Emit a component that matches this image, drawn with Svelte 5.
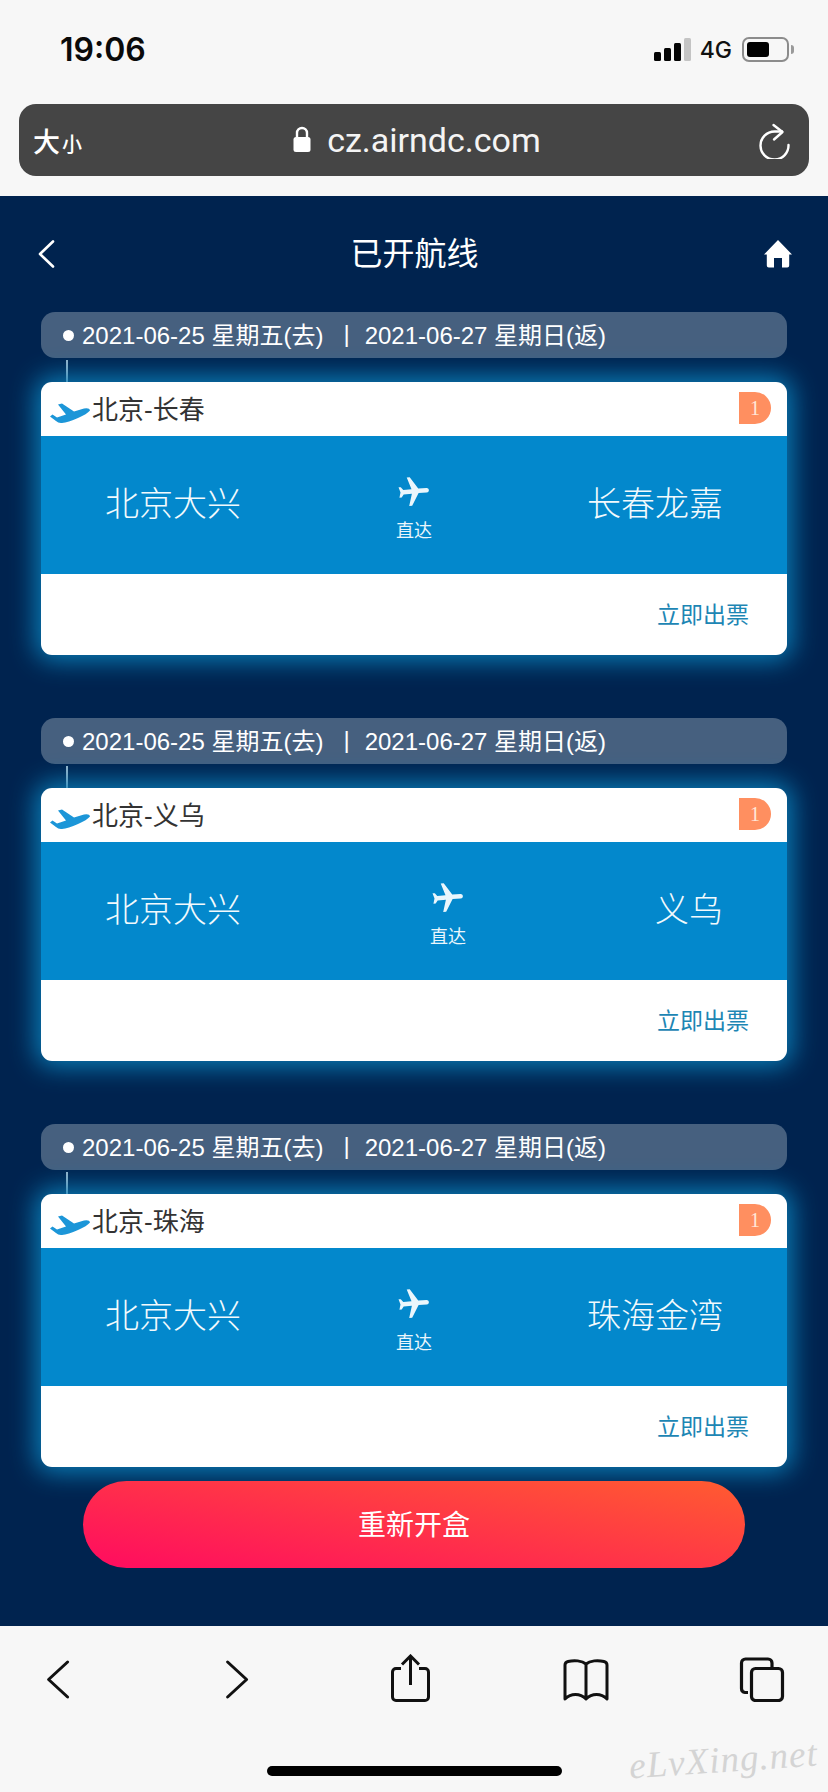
<script>
	const routes = [
		{ name: "北京-长春", from: "北京大兴", to: "长春龙嘉" },
		{ name: "北京-义乌", from: "北京大兴", to: "义乌" },
		{ name: "北京-珠海", from: "北京大兴", to: "珠海金湾" }
	];
</script>

<div class="page">
	<header class="browser-top">
		<div class="status">
			<span class="time">19:06</span>
			<div class="status-right">
				<div class="signal">
					<i class="b1"></i><i class="b2"></i><i class="b3"></i><i class="b4"></i>
				</div>
				<span class="net">4G</span>
				<div class="battery"><div class="level"></div></div>
				<div class="battery-tip"></div>
			</div>
		</div>
		<div class="urlbar">
			<div class="textsize"><span class="big">大</span><span class="small">小</span></div>
			<div class="address">
				<svg class="lock" viewBox="0 0 18 26" width="18" height="26">
					<path d="M4 12V7a5 5 0 0 1 10 0v5" fill="none" stroke="#fff" stroke-width="2.4" />
					<rect x="0.5" y="11" width="17" height="15" rx="2.5" fill="#fff" />
				</svg>
				<span>cz.airndc.com</span>
			</div>
			<svg class="reload" viewBox="0 0 32 36" width="32" height="36">
				<path d="M24 8.500H16.500A14 14 0 1 0 30.500 22" fill="none" stroke="#fff" stroke-width="2.400" stroke-linecap="round" />
				<path d="M15.500 2L24.500 9L16 16.500" fill="none" stroke="#fff" stroke-width="2.400" stroke-linecap="round" stroke-linejoin="round" />
			</svg>
		</div>
	</header>

	<main class="content">
		<nav class="nav">
			<svg viewBox="0 0 18 28" width="18" height="28">
				<path d="M16 1.500L3 14l13 12.500" fill="none" stroke="#fff" stroke-width="2.600" stroke-linecap="round" stroke-linejoin="round" />
			</svg>
			<h1>已开航线</h1>
			<svg viewBox="0 0 28 28" width="28" height="28">
				<path d="M14 0L28 14.500h-2.800V25.500a2 2 0 0 1-2 2H18V18h-8v9.500H4.800a2 2 0 0 1-2-2V14.500H0z" fill="#fff" />
			</svg>
		</nav>

		{#each routes as route}
			<section class="group">
				<div class="dates">
					<i class="dot"></i>
					<span>2021-06-25 星期五(去)</span>
					<span class="sep">|</span>
					<span>2021-06-27 星期日(返)</span>
				</div>
				<div class="connector"></div>
				<article class="card">
					<div class="card-head">
						<svg class="takeoff" viewBox="0 0 40 20" width="40" height="20">
							<path d="M0 13.500L2.500 11.500L7 14.500L16 11.500L8 1.500L12 0.500L24 8.500L34 5.500Q39.500 4.500 40 7.500Q37 11 28 15Q18 19.500 12 20Q8.500 20.200 6 18Z" fill="#1c96d8" />
						</svg>
						<span class="route-name">{route.name}</span>
						<span class="badge">1</span>
					</div>
					<div class="card-body">
						<span class="city">{route.from}</span>
						<div class="direct">
							<svg viewBox="0 0 24 24" width="36" height="36">
								<path transform="rotate(85 12 12)" d="M21 16v-2l-8-5V3.500c0-.83-.67-1.500-1.500-1.500S10 2.670 10 3.500V9l-8 5v2l8-2.500V19l-2 1.500V22l3.500-1 3.500 1v-1.500L13 19v-5.500l8 2.500z" fill="#eaf6fc" />
							</svg>
							<span>直达</span>
						</div>
						<span class="city">{route.to}</span>
					</div>
					<div class="card-foot">
						<span>立即出票</span>
					</div>
				</article>
			</section>
		{/each}

		<button class="reopen">重新开盒</button>
	</main>

	<footer class="toolbar">
		<div class="icons">
			<svg viewBox="0 0 46 48" width="46" height="48">
				<path d="M32.600 8L13.600 25.500L32.600 43" fill="none" stroke="#111" stroke-width="3" stroke-linecap="round" stroke-linejoin="round" />
			</svg>
			<svg viewBox="0 0 46 48" width="46" height="48">
				<path d="M16.600 8L35.600 25.500L16.600 43" fill="none" stroke="#111" stroke-width="3" stroke-linecap="round" stroke-linejoin="round" />
			</svg>
			<svg viewBox="0 0 46 48" width="46" height="48">
				<path d="M14 14.500H9a3.500 3.500 0 0 0-3.500 3.500V43a3.500 3.500 0 0 0 3.500 3.500H38A3.500 3.500 0 0 0 41.500 43V18A3.500 3.500 0 0 0 38 14.500H32" fill="none" stroke="#111" stroke-width="3" />
				<path d="M23.500 31V2M15 10.500L23.500 2L32 10.500" fill="none" stroke="#111" stroke-width="3" />
			</svg>
			<svg viewBox="0 0 46 48" width="46" height="48">
				<path d="M23 10C19 6.500 11 6 5 7.500C3 8 2 9 2 11V45C8 39 17 39 23 45C29 39 38 39 44 45V11C44 9 43 8 41 7.500C35 6 27 6.500 23 10ZM23 10V45" fill="none" stroke="#111" stroke-width="3" stroke-linejoin="round" />
			</svg>
			<svg viewBox="0 0 46 48" width="46" height="48">
				<path d="M9 38.500H6A4 4 0 0 1 2.500 34.500V9A4 4 0 0 1 6.500 5H29A4 4 0 0 1 33 9V14" fill="none" stroke="#111" stroke-width="3.200" />
				<rect x="12.500" y="14.500" width="31" height="32" rx="4" fill="none" stroke="#111" stroke-width="3.200" />
			</svg>
		</div>
		<div class="home-row">
			<div class="home-bar"></div>
			<span class="watermark">eLvXing.net</span>
		</div>
	</footer>
</div>

<style>
	:global(body) {
		margin: 0;
		background: #f7f7f7;
	}
	.page {
		width: 828px;
		height: 1792px;
		display: flex;
		flex-direction: column;
		overflow: hidden;
		font-family: "Liberation Sans", "Noto Sans CJK SC", sans-serif;
		background: #f7f7f7;
	}

	/* browser chrome */
	.browser-top {
		height: 196px;
		flex: none;
		padding: 0 19px;
		box-sizing: border-box;
	}
	.status {
		height: 104px;
		display: flex;
		align-items: center;
		justify-content: space-between;
		padding: 0 15px 5px 41px;
		box-sizing: border-box;
	}
	.time {
		font-family: Inter, sans-serif;
		font-size: 32px;
		font-weight: 600;
		color: #0a0a0a;
	}
	.status-right {
		display: flex;
		align-items: center;
	}
	.signal {
		display: flex;
		align-items: flex-end;
		gap: 3px;
		height: 23px;
	}
	.signal i {
		width: 7px;
		background: #050505;
		border-radius: 1.5px;
	}
	.signal .b1 { height: 9px; }
	.signal .b2 { height: 13px; }
	.signal .b3 { height: 18px; }
	.signal .b4 { height: 23px; background: #c4c4c4; }
	.net {
		font-family: Inter, sans-serif;
		font-size: 23px;
		font-weight: 500;
		color: #111;
		margin: 0 10px 0 9px;
	}
	.battery {
		width: 47px;
		height: 25px;
		box-sizing: border-box;
		border: 2px solid #8c8c8c;
		border-radius: 7px;
		padding: 3px;
	}
	.level {
		width: 22px;
		height: 15px;
		background: #000;
		border-radius: 3px;
	}
	.battery-tip {
		width: 3px;
		height: 9px;
		margin-left: 2px;
		background: #9a9a9a;
		border-radius: 0 3px 3px 0;
	}
	.urlbar {
		height: 72px;
		background: #454545;
		border-radius: 17px;
		display: grid;
		grid-template-columns: 1fr auto 1fr;
		align-items: center;
		padding: 0 19px 0 14px;
		color: #fff;
	}
	.textsize {
		display: flex;
		align-items: baseline;
		font-weight: 500;
		font-family: "Noto Sans CJK SC", sans-serif;
	}
	.big { font-size: 27px; }
	.small { font-size: 20px; margin-left: 2px; }
	.address {
		display: flex;
		align-items: center;
		gap: 16px;
		margin-left: 11px;
		font-family: Roboto, sans-serif;
		font-size: 34px;
		color: #f4f4f4;
	}
	.lock { margin-top: -2px; }
	.reload { justify-self: end; margin-top: 2px; }

	/* page */
	.content {
		flex: 1;
		background: #00234f;
		padding: 0 41px;
		display: flex;
		flex-direction: column;
	}
	.nav {
		height: 116px;
		flex: none;
		display: flex;
		align-items: center;
		justify-content: space-between;
		margin: 0 -5px 0 -4px;
	}
	.nav h1 {
		margin: 0 0 6px 10px;
		font-size: 32px;
		font-weight: 400;
		color: #fff;
		font-family: "Noto Sans CJK SC", sans-serif;
	}
	.group {
		margin-bottom: 63px;
	}
	.group:nth-of-type(3) {
		margin-bottom: 14px;
	}
	.dates {
		height: 46px;
		box-sizing: border-box;
		padding: 0 0 3px 22px;
		background: #46607f;
		border-radius: 14px;
		display: flex;
		align-items: center;
		color: #fff;
		font-size: 24px;
		white-space: pre;
	}
	.dot {
		width: 11px;
		height: 11px;
		border-radius: 50%;
		background: #fff;
		margin: 3px 8px 0 0;
	}
	.sep {
		margin: 0 15px 0 20px;
	}
	.connector {
		width: 2px;
		height: 22px;
		margin: 2px 0 0 25px;
		background: #9ab7cc;
	}
	.card {
		height: 273px;
		border-radius: 11px;
		overflow: hidden;
		display: flex;
		flex-direction: column;
		background: #fff;
		box-shadow: 0 0 26px 5px #0a80ba;
	}
	.card-head {
		height: 54px;
		flex: none;
		display: flex;
		align-items: center;
		padding: 0 16px 0 9px;
		color: #333;
	}
	.takeoff {
		margin-top: 8px;
	}
	.route-name {
		font-size: 26px;
		margin: 0 0 4px 2px;
		flex: 1;
	}
	.badge {
		width: 32px;
		height: 32px;
		background: #ff8f60;
		border-radius: 0 16px 16px 0;
		color: #ffe6d8;
		font-family: "Liberation Serif", serif;
		font-size: 20px;
		line-height: 32px;
		text-align: center;
		margin-bottom: 2px;
	}
	.card-body {
		height: 138px;
		flex: none;
		background: #0388cc;
		color: #fff;
		display: flex;
		align-items: center;
		justify-content: space-between;
		padding: 0 64px;
	}
	.city {
		font-size: 34px;
		color: #f2fafd;
		font-weight: 300;
		margin-bottom: 8px;
	}
	.direct {
		display: flex;
		flex-direction: column;
		align-items: center;
		font-size: 18px;
		color: #eaf6fc;
		gap: 6px;
		margin-top: 6px;
	}
	.card-foot {
		flex: 1;
		display: flex;
		align-items: center;
		justify-content: flex-end;
		padding: 0 38px 4px 0;
		font-size: 23px;
		color: #1d86b4;
	}
	.reopen {
		align-self: center;
		width: 662px;
		height: 87px;
		border: none;
		border-radius: 44px;
		padding: 0 0 4px;
		background: linear-gradient(10deg, #ff0b60, #ff5c30);
		color: #fff;
		font-size: 28px;
		font-family: "Noto Sans CJK SC", sans-serif;
	}

	/* bottom bar */
	.toolbar {
		height: 166px;
		flex: none;
		background: #f7f7f7;
		position: relative;
	}
	.icons {
		display: flex;
		gap: 130px;
		padding: 28px 0 0 35px;
	}
	.home-row {
		display: flex;
		justify-content: center;
		margin-top: 64px;
	}
	.home-bar {
		width: 295px;
		height: 10px;
		background: #000;
		border-radius: 5px;
	}
	.watermark {
		position: absolute;
		right: 10px;
		bottom: 11px;
		font-family: "Liberation Serif", serif;
		font-style: italic;
		font-size: 37px;
		letter-spacing: 1px;
		color: #d4d4d4;
		transform: rotate(-4deg);
	}
</style>
